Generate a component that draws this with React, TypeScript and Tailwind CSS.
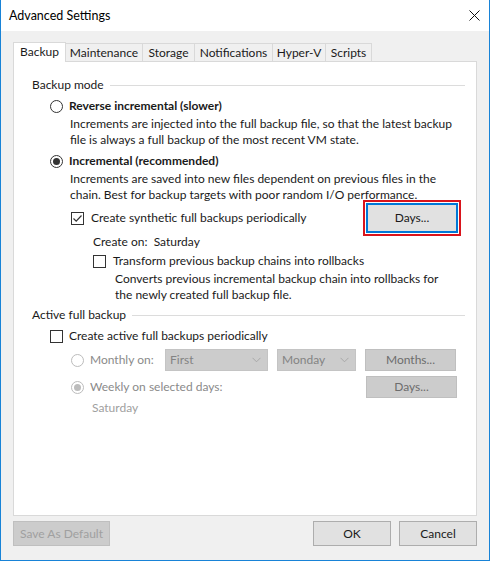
import React from 'react';

const font = { fontFamily: 'Lato, "Noto Sans", sans-serif' };

// Win32 style radio button
const Radio: React.FC<{ checked?: boolean; disabled?: boolean }> = ({ checked, disabled }) => (
  <span
    className={
      'flex h-[13px] w-[13px] shrink-0 items-center justify-center rounded-full border bg-white ' +
      (disabled ? 'border-[#bcbcbc]' : 'border-[#333333]')
    }
  >
    {checked && (
      <span className={'h-[7px] w-[7px] rounded-full ' + (disabled ? 'bg-[#bcbcbc]' : 'bg-[#333333]')} />
    )}
  </span>
);

const Checkbox: React.FC<{ checked?: boolean }> = ({ checked }) => (
  <span className="flex h-[13px] w-[13px] shrink-0 items-center justify-center border border-[#333333] bg-white">
    {checked && (
      <svg width="11" height="11" viewBox="0 0 11 11">
        <path d="M1.5 5.5 L4.2 8.2 L9.5 2.5" fill="none" stroke="#333333" strokeWidth="1.2" />
      </svg>
    )}
  </span>
);

const GroupLabel: React.FC<{ label: string }> = ({ label }) => (
  <div className="flex items-center gap-[6px] pr-[11px]">
    <span className="text-[#1a1a1a]">{label}</span>
    <span className="h-px flex-1 bg-[#dcdcdc]" />
  </div>
);

const Select: React.FC<{ value: string; width: string }> = ({ value, width }) => (
  <div className={'flex h-[22px] items-center justify-between border border-[#c4c4c4] bg-[#cccccc] pl-[4px] pr-[6px] text-[#838383] ' + width}>
    <span>{value}</span>
    <svg width="9" height="6" viewBox="0 0 9 6">
      <path d="M0.5 0.8 L4.5 4.8 L8.5 0.8" fill="none" stroke="#a8a8a8" strokeWidth="1" />
    </svg>
  </div>
);

const DisabledButton: React.FC<{ label: string; className?: string }> = ({ label, className }) => (
  <div className={'flex h-[22px] w-[91px] items-center justify-center border border-[#bfbfbf] bg-[#cccccc] text-[#6d6d6d] ' + (className ?? '')}>
    {label}
  </div>
);

export default function App() {
  const tabs = ['Backup', 'Maintenance', 'Storage', 'Notifications', 'Hyper-V', 'Scripts'];
  const tabWidths = ['w-[53px]', 'w-[77px]', 'w-[52px]', 'w-[78px]', 'w-[53px]', 'w-[46px]'];

  return (
    <div className="flex h-[561px] w-[490px] flex-col whitespace-nowrap border-x border-b border-[#1883d7] text-[12px] leading-[16px] text-[#1a1a1a]" style={font}>
      {/* Title bar */}
      <div className="flex h-[31px] shrink-0 items-center justify-between bg-white pl-[8px] pr-[9px]">
        <span className="text-[12.5px] text-black">Advanced Settings</span>
        <svg width="11" height="11" viewBox="0 0 11 11">
          <path d="M0.5 0.5 L10.5 10.5 M10.5 0.5 L0.5 10.5" stroke="#111111" strokeWidth="1" />
        </svg>
      </div>

      <div className="flex flex-1 flex-col bg-[#f0f0f0] px-[12px] pt-[12px]">
        {/* Tabs */}
        <div className="flex h-[18px] items-end">
          {tabs.map((t, i) => (
            <div
              key={t}
              className={
                'flex items-center justify-center border-t border-r border-[#d9d9d9] ' +
                tabWidths[i] +
                (i === 0
                  ? ' relative z-10 -mb-px h-[20px] border-l bg-white pb-[1px]'
                  : ' h-[18px] bg-[#f0f0f0]')
              }
            >
              {t}
            </div>
          ))}
        </div>

        {/* Tab panel */}
        <div className="flex h-[455px] flex-col border border-[#d9d9d9] bg-white pl-[18px] pt-[15px]">
          <GroupLabel label="Backup mode" />

          <div className="mt-[5px] flex items-center gap-[6px] pl-[18px]">
            <Radio />
            <span className="font-bold">Reverse incremental (slower)</span>
          </div>
          <div className="pl-[38px] pt-[2px]">
            Increments are injected into the full backup file, so that the latest backup
            <br />
            file is always a full backup of the most recent VM state.
          </div>

          <div className="mt-[5px] flex items-center gap-[6px] pl-[18px]">
            <Radio checked />
            <span className="font-bold">Incremental (recommended)</span>
          </div>
          <div className="pl-[38px] pt-[2px]">
            Increments are saved into new files dependent on previous files in the
            <br />
            chain. Best for backup targets with poor random I/O performance.
          </div>

          <div className="-mt-[3px] flex items-center pl-[39px]">
            <Checkbox checked />
            <span className="ml-[7px] flex-1">Create synthetic full backups periodically</span>
            <div className="mr-[15px] border-2 border-[#d9141c] p-px">
              <div className="flex h-[30px] w-[92px] items-center justify-center border-2 border-[#0078d7] bg-[#e1e1e1]">
                Days...
              </div>
            </div>
          </div>

          <div className="-mt-[2px] pl-[61px]">Create on:&nbsp; Saturday</div>

          <div className="mt-[3px] flex items-center pl-[61px]">
            <Checkbox />
            <span className="ml-[7px]">Transform previous backup chains into rollbacks</span>
          </div>
          <div className="pl-[83px] pt-[2px]">
            Converts previous incremental backup chain into rollbacks for
            <br />
            the newly created full backup file.
          </div>

          <div className="mt-[4px]">
            <GroupLabel label="Active full backup" />
          </div>

          <div className="mt-[5px] flex items-center pl-[18px]">
            <Checkbox />
            <span className="ml-[6px]">Create active full backups periodically</span>
          </div>

          <div className="mt-[5px] flex items-center pl-[39px] text-[#8a8a8a]">
            <Radio disabled />
            <span className="ml-[6px] w-[75px]">Monthly on:</span>
            <Select value="First" width="w-[103px]" />
            <Select value="Monday" width="ml-[9px] w-[79px]" />
            <DisabledButton label="Months..." className="ml-[9px]" />
          </div>

          <div className="mt-[5px] flex items-center pl-[39px] text-[#8a8a8a]">
            <Radio checked disabled />
            <span className="ml-[6px] flex-1">Weekly on selected days:</span>
            <DisabledButton label="Days..." className="mr-[19px]" />
          </div>

          <div className="mt-[2px] pl-[60px] text-[#a0a0a0]">Saturday</div>
        </div>

        {/* Dialog buttons */}
        <div className="mt-[5px] flex items-center">
          <div className="flex h-[25px] w-[97px] items-center justify-center border border-[#bfbfbf] bg-[#cccccc] text-[#a0a0a0]">
            Save As Default
          </div>
          <div className="flex-1" />
          <div className="flex h-[25px] w-[78px] items-center justify-center border border-[#adadad] bg-[#e1e1e1]">
            OK
          </div>
          <div className="ml-[8px] flex h-[25px] w-[78px] items-center justify-center border border-[#adadad] bg-[#e1e1e1]">
            Cancel
          </div>
        </div>
      </div>
    </div>
  );
}
